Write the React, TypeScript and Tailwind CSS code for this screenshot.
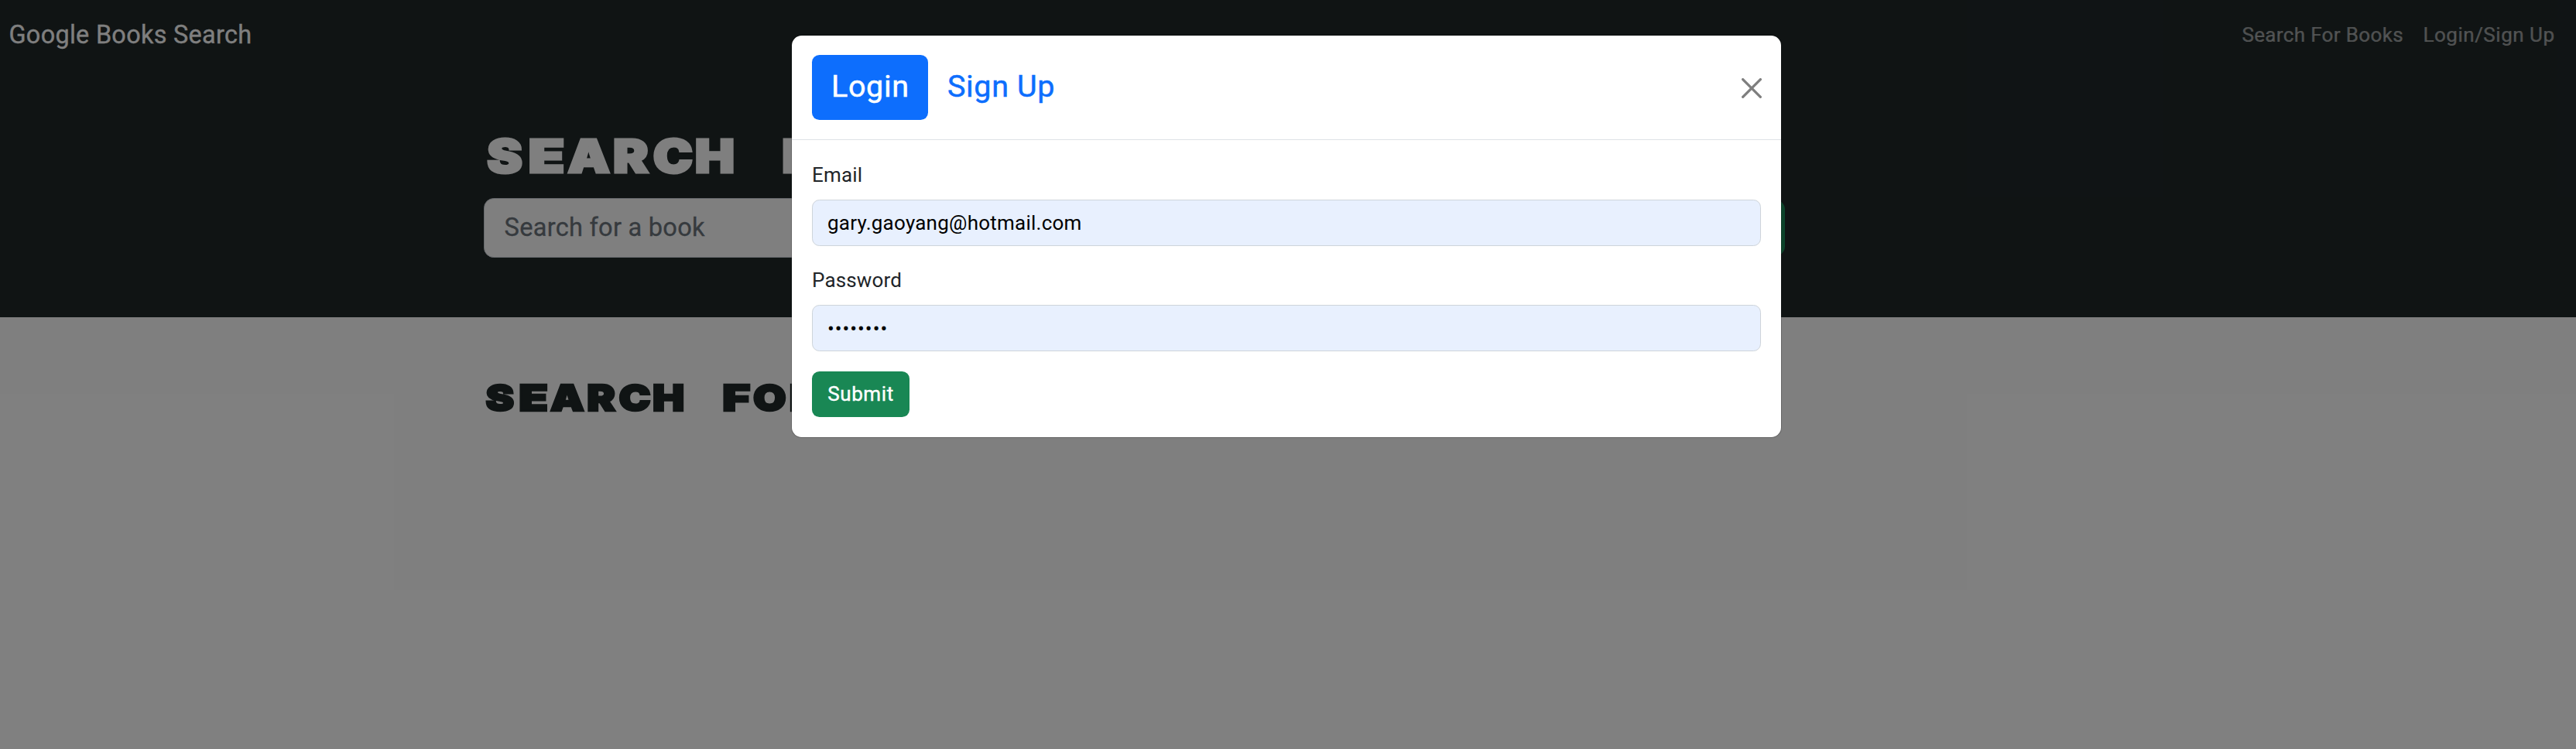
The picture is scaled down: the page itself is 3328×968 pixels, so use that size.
import type { ReactNode } from "react";

function MonoTitle({ text, cell }: { text: string; cell: string }) {
  return (
    <span className="inline-block origin-left scale-x-[1.17] whitespace-nowrap">
      {Array.from(text).map((ch, i) => (
        <span
          key={i}
          className={`inline-flex justify-center whitespace-pre ${cell} ${"EF".includes(ch) ? "scale-x-[1.12]" : ""}`}
        >
          {ch}
        </span>
      ))}
    </span>
  );
}

function Navbar() {
  return (
    <nav className="flex h-[90px] items-center justify-between pr-[27.5px] pl-[11.5px]">
      <a className="text-[32.4px] tracking-[0.3px] text-white [-webkit-text-stroke:0.3px]">Google Books Search</a>
      <ul className="flex gap-[25.6px] text-[26px] text-white/55 [-webkit-text-stroke:0.2px]">
        <li className="tracking-[0.35px]">Search For Books</li>
        <li className="tracking-[0.5px]">Login/Sign Up</li>
      </ul>
    </nav>
  );
}

function Page() {
  return (
    <div className="h-[968px] bg-white">
      <header className="h-[410px] bg-[#202829]">
        <Navbar />
        <div className="ml-[625px] w-[2078px] pt-[74px]">
          <h1 className="h-[92px] overflow-hidden font-['Inter',sans-serif] text-[58.5px] leading-[76px] font-black text-white [-webkit-text-stroke:3px_white]">
            <MonoTitle text="SEARCH FOR" cell="w-[46.4px]" />
          </h1>
          <form className="flex items-center gap-[25.6px]">
            <div className="flex h-[77px] w-[1368px] items-center rounded-[12.8px] border border-[#ced4da] bg-white px-[25.6px] text-[32.6px] tracking-[0.25px] text-[#6c757d] [-webkit-text-stroke:0.3px]">
              Search for a book
            </div>
            <button type="button" aria-label="Search" className="h-[73px] w-[287px] rounded-[12.8px] bg-[#198754]" />
          </form>
        </div>
      </header>
      <main className="ml-[624px] pt-[74px]">
        <h2 className="font-['Inter',sans-serif] text-[47px] leading-[60px] font-black text-[#202829] [-webkit-text-stroke:2.6px_#202829]">
          <MonoTitle text="SEARCH FOR" cell="w-[37.25px]" />
        </h2>
      </main>
    </div>
  );
}

function Field({ label, children }: { label: string; children: ReactNode }) {
  return (
    <div className="mb-[26px]">
      <div className="mb-[13px] h-[37px] text-[26px] leading-[37px] tracking-[0.15px] text-[#212529]">{label}</div>
      <div className="flex h-[60px] items-center rounded-[9.6px] border border-[#ced4da] bg-[#e8f0fe] px-[19px] text-[26px] text-black">
        {children}
      </div>
    </div>
  );
}

function LoginModal() {
  return (
    <div className="absolute top-[46px] left-[1023px] h-[519px] w-[1278px] rounded-[12.8px] bg-white shadow-[0_0_0_1px_rgba(0,0,0,0.2)]">
      <div className="flex h-[135px] items-center justify-between border-b border-[#dee2e6] pr-[25px] pl-[26px]">
        <div className="flex text-[39.5px] leading-[80px] tracking-[0.65px] [-webkit-text-stroke:0.5px]">
          <button className="h-[84px] w-[150px] rounded-[9.6px] bg-[#0d6efd] pb-[3px] pl-[25px] text-left text-white">Login</button>
          <button className="h-[84px] pb-[3px] pl-[25px] text-[#0d6efd]">Sign Up</button>
        </div>
        <svg viewBox="0 0 16 16" className="mt-[2px] size-[26px] fill-black opacity-50">
          <path d="M.293.293a1 1 0 0 1 1.414 0L8 6.586 14.293.293a1 1 0 1 1 1.414 1.414L9.414 8l6.293 6.293a1 1 0 0 1-1.414 1.414L8 9.414l-6.293 6.293a1 1 0 0 1-1.414-1.414L6.586 8 .293 1.707a1 1 0 0 1 0-1.414z" />
        </svg>
      </div>
      <div className="pt-[27px] pr-[26px] pl-[26px]">
        <Field label="Email">
          <span className="tracking-[0.24px]">gary.gaoyang@hotmail.com</span>
        </Field>
        <Field label="Password">
          <span className="pt-[2px] tracking-[1px]">••••••••</span>
        </Field>
        <button className="h-[59px] w-[126px] rounded-[9.6px] bg-[#198754] text-[26px] tracking-[0.6px] text-white [-webkit-text-stroke:0.4px]">
          Submit
        </button>
      </div>
    </div>
  );
}

export default function App() {
  return (
    <div className="relative h-[968px] w-full overflow-hidden font-['Roboto',sans-serif]">
      <Page />
      <div className="absolute inset-0 bg-black/50" />
      <LoginModal />
    </div>
  );
}
